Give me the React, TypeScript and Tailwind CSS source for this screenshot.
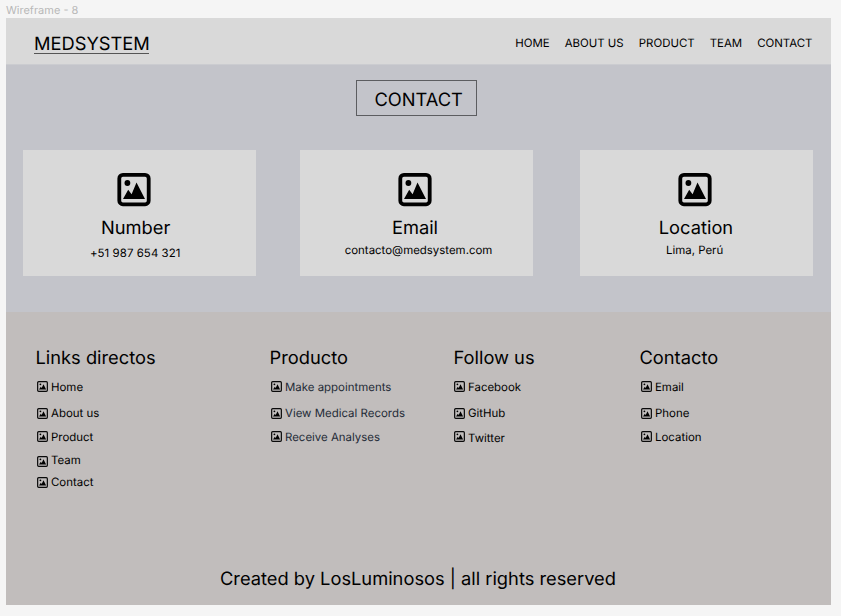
type IconProps = { className: string; bold?: boolean };

function PictureIcon({ className, bold = false }: IconProps) {
  return bold ? (
    <svg viewBox="0 0 34 34" className={className}>
      <rect x="2.3" y="1.9" width="29.4" height="29.4" rx="3.6" fill="none" stroke="#000" strokeWidth="3.8" />
      <circle cx="10.4" cy="10" r="2.9" />
      <path d="M6 26 11.2 16.8 14.6 21.2 19.5 9.6 28 26Z" />
    </svg>
  ) : (
    <svg viewBox="0 0 11 11" className={className}>
      <rect x="0.65" y="0.65" width="9.7" height="9.7" rx="1" fill="none" stroke="#0a0a0a" strokeWidth="1.2" />
      <circle cx="3.4" cy="3.3" r="0.9" />
      <path d="M2 8.5 3.8 5.8 4.7 6.9 6.5 3.3 9.1 8.5Z" />
    </svg>
  );
}

const cards = [
  { title: "Number", text: "+51 987 654 321", box: "w-[233px]", icon: "ml-[94px]", head: "ml-[77.6px]", body: "ml-[66.6px] mt-[4px] tracking-[0.06px]" },
  { title: "Email", text: "contacto@medsystem.com", box: "w-[233px] ml-[44px]", icon: "ml-[98px]", head: "ml-[91.5px]", body: "ml-[44.3px] mt-px" },
  { title: "Location", text: "Lima, Perú", box: "w-[233px] ml-[47px]", icon: "ml-[98px]", head: "ml-[78.4px]", body: "ml-[85.6px] mt-px" },
];

const columns = [
  {
    title: "Links directos",
    box: "w-[234px]",
    color: "text-black",
    items: [
      { label: "Home", row: "h-[26px]", icon: "-mt-px", text: "" },
      { label: "About us", row: "h-[26px]", icon: "", text: "" },
      { label: "Product", row: "h-[22px]", icon: "-mt-px", text: "-mt-px" },
      { label: "Team", row: "h-[25px]", icon: "mt-px", text: "-mt-px" },
      { label: "Contact", row: "h-[18px]", icon: "", text: "" },
    ],
  },
  {
    title: "Producto",
    box: "w-[184px]",
    color: "text-[#1f2b37]",
    items: [
      { label: "Make appointments", row: "h-[26px]", icon: "-mt-px", text: "" },
      { label: "View Medical Records", row: "h-[26px]", icon: "", text: "" },
      { label: "Receive Analyses", row: "h-[22px]", icon: "-mt-px", text: "-mt-px" },
    ],
  },
  {
    title: "Follow us",
    box: "w-[186px]",
    color: "text-black",
    items: [
      { label: "Facebook", row: "h-[26px]", icon: "-ml-px -mt-px", text: "" },
      { label: "GitHub", row: "h-[26px]", icon: "-ml-px", text: "" },
      { label: "Twitter", row: "h-[22px]", icon: "-ml-px -mt-px", text: "mt-px" },
    ],
  },
  {
    title: "Contacto",
    box: "w-[180px]",
    color: "text-black",
    items: [
      { label: "Email", row: "h-[26px]", icon: "-mt-px", text: "" },
      { label: "Phone", row: "h-[26px]", icon: "", text: "" },
      { label: "Location", row: "h-[22px]", icon: "-mt-px", text: "-mt-px" },
    ],
  },
];

export default function App() {
  return (
    <div className="h-[616px] w-[841px] overflow-hidden bg-[#f5f5f5] pl-[6px] font-['Inter',sans-serif] text-black [text-rendering:geometricPrecision]">
      <div className="h-[18px] whitespace-nowrap pt-[2px] text-[11px] leading-[16px] text-[#b8b8b8]">Wireframe - 8</div>
      <div className="flex h-[587px] w-[825px] flex-col">
        <header className="flex h-[46px] items-start bg-[#d9d9d9] pl-[28px] pr-[18.5px]">
          <div className="mt-[13px] h-[23px] w-[115px] whitespace-nowrap border-b border-[#555] text-[18.3px] leading-[26px]">MEDSYSTEM</div>
          <nav className="ml-auto mt-[16px] flex gap-[15px] whitespace-nowrap text-[11.45px] leading-[18px]">
            <a>HOME</a>
            <a>ABOUT US</a>
            <a>PRODUCT</a>
            <a>TEAM</a>
            <a>CONTACT</a>
          </nav>
        </header>
        <main className="h-[248px] border-t border-[#cbccd0] bg-[#c3c4ca] pl-[17.4px] pt-[15px]">
          <h1 className="ml-[333px] h-[36px] w-[120.5px] whitespace-nowrap border border-[#5c5d60] pl-[17px] pt-[6px] text-[18.3px] leading-[26px]">CONTACT</h1>
          <div className="mt-[34px] flex">
            {cards.map((c) => (
              <section key={c.title} className={`h-[126.4px] shrink-0 bg-[#d9d9d9] pt-[23px] ${c.box}`}>
                <PictureIcon bold className={`size-[34px] ${c.icon}`} />
                <h2 className={`mt-[8px] whitespace-nowrap text-[18.3px] leading-[26px] ${c.head}`}>{c.title}</h2>
                <p className={`whitespace-nowrap text-[11.45px] leading-[16px] ${c.body}`}>{c.text}</p>
              </section>
            ))}
          </div>
        </main>
        <footer className="flex flex-1 flex-col bg-[#c1bdbc] pt-[34px]">
          <div className="flex pl-[29px]">
            {columns.map((col) => (
              <section key={col.title} className={`shrink-0 whitespace-nowrap ${col.box}`}>
                <h2 className="pl-[0.5px] text-[18.3px] leading-[24px]">{col.title}</h2>
                <ul className={`mt-[4px] pl-[2px] text-[11.45px] leading-[16px] ${col.color}`}>
                  {col.items.map((it) => (
                    <li key={it.label} className={`flex items-center ${it.row}`}>
                      <PictureIcon className={`size-[11px] shrink-0 ${it.icon}`} />
                      <span className={`ml-[3px] ${it.text}`}>{it.label}</span>
                    </li>
                  ))}
                </ul>
              </section>
            ))}
          </div>
          <p className="mb-[14px] ml-[214px] mt-auto whitespace-nowrap text-[18.3px] leading-[24px]">Created by LosLuminosos | all rights reserved</p>
        </footer>
      </div>
    </div>
  );
}
